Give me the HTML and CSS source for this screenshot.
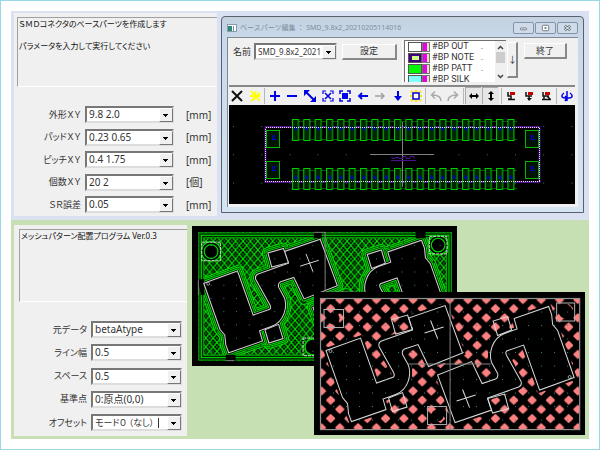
FILE: index.html
```html
<!DOCTYPE html>
<html lang="ja">
<head>
<meta charset="utf-8">
<title>SMDコネクタ / メッシュパターン</title>
<link rel="stylesheet" href="styles.css">
</head>
<body>
<main class="page">
  <section class="maker">
    <div class="panel">
      <div class="message">
        <p>ＳＭＤコネクタのベースパーツを作成します</p>
        <p>パラメータを入力して実行してください</p>
      </div>
      <form class="fields fields-units">
        <label for="outer">外形ＸＹ</label><span class="combo"><select id="outer"><option>9.8 2.0</option></select></span><span>[mm]</span>
        <label for="pad">パッドＸＹ</label><span class="combo"><select id="pad"><option>0.23 0.65</option></select></span><span>[mm]</span>
        <label for="pitch">ピッチＸＹ</label><span class="combo"><select id="pitch"><option>0.4 1.75</option></select></span><span>[mm]</span>
        <label for="count">個数ＸＹ</label><span class="combo"><select id="count"><option>20 2</option></select></span><span>[個]</span>
        <label for="sr">ＳＲ誤差</label><span class="combo"><select id="sr"><option>0.05</option></select></span><span>[mm]</span>
      </form>
    </div>

    <div class="window">
      <header class="titlebar">
        <svg class="app-icon" viewBox="0 0 10 8"><rect x=".5" y=".5" width="9" height="7" fill="#fff" stroke="#8a9aaa"/><rect x="1" y="2" width="4" height="5" fill="#2c8a78"/><rect x="6" y="2" width="1" height="5" fill="#6b8fb5"/></svg>
        <h1>ベースパーツ編集 ： SMD_9.8x2_20210205114016</h1>
        <div class="window-buttons">
          <button type="button" aria-label="最小化"><svg viewBox="0 0 20 11"><rect x="6.500" y="5.500" width="7" height="2" rx="1" fill="#fff" stroke="#66717e"/></svg></button>
          <button type="button" aria-label="最大化"><svg viewBox="0 0 20 11"><rect x="6.500" y="2.500" width="7" height="6" rx="1" fill="#fff" stroke="#66717e"/><rect x="9" y="4.500" width="2" height="2" fill="#66717e"/></svg></button>
          <button type="button" aria-label="閉じる"><svg viewBox="0 0 20 11"><path d="M7 3l6 5M13 3l-6 5" stroke="#66717e" stroke-width="3"/><path d="M7 3l6 5M13 3l-6 5" stroke="#fff" stroke-width="1"/></svg></button>
        </div>
      </header>
      <div class="client">
        <div class="controls">
          <div class="name-group">
            <label for="name">名前</label>
            <span class="combo"><select id="name"><option>SMD_9.8x2_20210205114016</option></select></span>
            <button type="button" class="push">設定</button>
          </div>
          <div class="layers">
            <ul>
              <li><svg viewBox="0 0 22 10"><use href="#chip"/><rect x="1" y="1" width="12" height="8" fill="#fff"/></svg>#BP OUT<i>.</i></li>
              <li><svg viewBox="0 0 22 10"><use href="#chip"/><rect x="1" y="1" width="12" height="8" fill="#400080"/><rect x="4" y="3" width="7" height="4" fill="#d0ff80"/></svg>#BP NOTE<i>.</i></li>
              <li><svg viewBox="0 0 22 10"><use href="#chip"/><rect x="1" y="1" width="12" height="8" fill="#00f800"/></svg>#BP PATT<i>.</i></li>
              <li><svg viewBox="0 0 22 10"><use href="#chip"/><rect x="1" y="1" width="12" height="8" fill="#80ffff"/></svg>#BP SILK</li>
            </ul>
            <svg class="scroll" viewBox="0 0 11 41"><rect width="11" height="41" fill="#f0f0f0"/><rect x="1" y="11" width="9" height="11" fill="#cdcdcd"/><path d="M3 8l2.500-2.500 2.500 2.500M3 34l2.500 2.500 2.500-2.500" fill="none" stroke="#444" stroke-width="1.500"/></svg>
          </div>
          <button type="button" class="push move">↓</button>
          <button type="button" class="push quit">終了</button>
        </div>
        <div class="toolbar">
          <button type="button" aria-label="取消"><svg viewBox="0 0 16 16"><path d="M3 3l10 10M13 3l-10 10" stroke="#111" stroke-width="2"/></svg></button>
          <button type="button" aria-label="再描画"><svg viewBox="0 0 16 16"><path d="M4 3l9 10M13 5l-9 8M9 3L7 12M3 8h10" stroke="#ff0" stroke-width="1.800"/></svg></button>
          <hr>
          <button type="button" aria-label="拡大"><svg viewBox="0 0 16 16"><path d="M3 8h10M8 3v10" stroke="#0000e8" stroke-width="2"/></svg></button>
          <button type="button" aria-label="縮小"><svg viewBox="0 0 16 16"><path d="M3 8h10" stroke="#0000e8" stroke-width="2"/></svg></button>
          <button type="button" aria-label="範囲"><svg viewBox="0 0 16 16"><path d="M4 4l8 8" stroke="#0000e8" stroke-width="2"/><path d="M2 8V2h6zM14 8v6H8z" fill="#0000e8"/></svg></button>
          <button type="button" aria-label="全体"><svg viewBox="0 0 16 16"><path d="M3 6V3h3M10 3h3v3M13 10v3h-3M6 13H3v-3" fill="none" stroke="#0000e8" stroke-width="1.200"/><path d="M5 5l6 6M11 5l-6 6" stroke="#0000e8" stroke-width="1.500"/></svg></button>
          <button type="button" aria-label="画面"><svg viewBox="0 0 16 16"><path d="M3 6V3h3M10 3h3v3M13 10v3h-3M6 13H3v-3" fill="none" stroke="#0000e8" stroke-width="1.500"/><rect x="5" y="5" width="6" height="6" fill="#0000e8"/></svg></button>
          <button type="button" aria-label="左"><svg viewBox="0 0 16 16"><path d="M13 8H4M7 5L4 8l3 3" fill="none" stroke="#0000e8" stroke-width="1.800"/></svg></button>
          <button type="button" aria-label="右"><svg viewBox="0 0 16 16"><path d="M3 8h9M9 5l3 3-3 3" fill="none" stroke="#a0a0a0" stroke-width="1.500"/></svg></button>
          <button type="button" aria-label="下"><svg viewBox="0 0 16 16"><path d="M8 3v7" stroke="#0000e8" stroke-width="2"/><path d="M4 8h8l-4 5z" fill="#0000e8"/></svg></button>
          <button type="button" aria-label="強調"><svg viewBox="0 0 16 16"><path d="M8 2v12M2 8h12M3 3l10 10M13 3L3 13" stroke="#ffe600" stroke-width="2"/><rect x="5" y="5" width="6" height="6" fill="#fff" stroke="#0000e8" stroke-width="1.500"/></svg></button>
          <hr>
          <button type="button" aria-label="元に戻す"><svg viewBox="0 0 16 16"><path d="M13 13C13 8 9 7 4 7M7 3.500L3.500 7 7 10.500" fill="none" stroke="#a8a8a8" stroke-width="1.500"/></svg></button>
          <button type="button" aria-label="やり直し"><svg viewBox="0 0 16 16"><path d="M3 13C3 8 7 7 12 7M9 3.500L12.500 7 9 10.500" fill="none" stroke="#a8a8a8" stroke-width="1.500"/></svg></button>
          <hr>
          <button type="button" class="pressed" aria-label="左右"><svg viewBox="0 0 16 16"><path d="M5 8h6" stroke="#000" stroke-width="2"/><path d="M3 8l3-3v6zM13 8l-3-3v6z"/></svg></button>
          <button type="button" class="pressed" aria-label="上下"><svg viewBox="0 0 16 16"><path d="M8 5v6" stroke="#000" stroke-width="2"/><path d="M8 3L5 6h6zM8 13l-3-3h6z"/></svg></button>
          <hr>
          <button type="button" aria-label="配置1"><svg viewBox="0 0 16 16"><path d="M5 4v4h3v3H5M5 11.500h7" fill="none" stroke="#111" stroke-width="1.500"/><rect x="7" y="4" width="5" height="3" fill="#c80000"/></svg></button>
          <button type="button" aria-label="配置2"><svg viewBox="0 0 16 16"><path d="M5 4v4h6M8 8v4" fill="none" stroke="#111" stroke-width="1.500"/><path d="M6 10h5l-3 3z" fill="#111"/><rect x="7" y="4" width="5" height="3" fill="#c80000"/></svg></button>
          <button type="button" aria-label="配置3"><svg viewBox="0 0 16 16"><path d="M5 4v4h6M6 8v4M4 11.500h9M9 8l3 3" fill="none" stroke="#111" stroke-width="1.500"/><rect x="7" y="4" width="5" height="3" fill="#c80000"/></svg></button>
          <hr>
          <button type="button" aria-label="回転"><svg viewBox="0 0 16 16"><path d="M8 3v10M5 5c-3 2-3 5 1 5h4c4 0 4-3 1-5M6 8l2 2-2 3" fill="none" stroke="#0000e8" stroke-width="1.500"/></svg></button>
        </div>
        <svg class="drawing" viewBox="229 105 346 99" role="img" aria-label="コネクタのパッド配置">
          <defs>
            <g id="chip"><rect width="14" height="10" fill="#555"/><rect x="14" width="8" height="10" fill="#777"/><rect x="15" y="1" width="4" height="8" fill="#e800e8"/><rect x="19" y="1" width="2" height="8" fill="#e8e8b0"/></g>
            <pattern id="pads" x="291" y="119" width="11.340" height="49" patternUnits="userSpaceOnUse">
              <path d="M0 2.500h12M0 20.500h12" stroke="#005a00"/>
              <rect x="1.500" y=".5" width="6" height="21" fill="#002400" stroke="#00d000"/>
              <path d="M3.500 7v4M5.500 8v4M3 9.500h3" stroke="#0000d8"/>
            </pattern>
            <g id="corner"><rect x=".5" y=".5" width="13" height="17" fill="#001400" stroke="#00b400"/><path d="M6.500 5v5M7 9.500h3M8.500 5v3" stroke="#0000f0"/></g>
            <pattern id="grid" x="233" y="126" width="28.200" height="28.300" patternUnits="userSpaceOnUse"><rect width="1" height="1" fill="#3a7468"/></pattern>
          </defs>
          <rect x="229" y="105" width="346" height="99"/>
          <rect x="229" y="105" width="346" height="99" fill="url(#grid)"/>
          <rect x="265.500" y="127" width="274" height="55" fill="none" stroke="#4a1488" stroke-width="2"/>
          <rect x="291" y="119" width="226" height="22" fill="url(#pads)"/>
          <rect x="291" y="168" width="226" height="22" fill="url(#pads)"/>
          <rect x="265.500" y="127.500" width="274" height="54" fill="none" stroke="#e8e0f0" stroke-dasharray="1 1" shape-rendering="crispEdges"/>
          <use href="#corner" x="266" y="130"/><use href="#corner" x="266" y="161"/>
          <use href="#corner" x="525" y="130"/><use href="#corner" x="525" y="161"/>
          <path d="M370 154.500h64M402.500 122v65" stroke="#808080"/>
          <path d="M391 160.500h25M392 156.500v2h3v-1h4v1h4v-2h3v2h4v-2h4v2" fill="none" stroke="#48108a"/>
        </svg>
      </div>
    </div>
  </section>

  <section class="mesh">
    <div class="panel">
      <div class="message"><p>メッシュパターン配置プログラム Ver.0.3</p></div>
      <form class="fields">
        <label for="source">元データ</label><span class="combo"><select id="source"><option>betaAtype</option></select></span>
        <label for="line">ライン幅</label><span class="combo"><select id="line"><option>0.5</option></select></span>
        <label for="space">スペース</label><span class="combo"><select id="space"><option>0.5</option></select></span>
        <label for="base">基準点</label><span class="combo"><select id="base"><option>0:原点(0,0)</option></select></span>
        <label for="offset">オフセット</label><span class="combo editing"><select id="offset"><option>モード０ （なし）</option></select></span>
      </form>
    </div>
    <div class="boards">
      <svg class="board-green" viewBox="-6.500 -6.500 271 143" role="img" aria-label="ライン塗りの基板">
        <defs>
          <path id="body" d="M5.500 52L40 39.500 56 84.500 73 78.500Q74.500 77 73 74L58.500 48Q57.500 44 61 42.500L92 31.500 88 19.500 124.500 7 142 54.500 108 68 97.500 46 84 50.500Q81 52 82 56L88 67C91 76 88 91 75 96L62.500 100.500 65.500 111 31 123 28 115 27 105 22 99Z"/>
          <path id="tab" d="M75 35.500L71 21 87 16.500 92 31Z"/>
          <path id="tab2" d="M68 99.500L82 94 86.500 108.500 72 113Z"/>
          <g id="half"><use href="#body"/><use href="#tab"/><use href="#tab2"/></g>
          <g id="both"><use href="#half"/><use href="#half" transform="rotate(180 129.500 65.500)"/></g>
          <g id="marks" fill="none" stroke="#d8d8d8">
            <path d="M104 34.500l19-6M110 22l7 18"/>
            <circle cx="10" cy="52.500" r="1.500" stroke-width=".7"/>
          </g>
          <pattern id="hatch" width="7.600" height="9" patternUnits="userSpaceOnUse"><path d="M0 0l7.600 9M7.600 0L0 9" stroke="#00e000" stroke-width="1.200"/><path d="M-1.900 2.250l3.800 4.500M5.700 2.250l3.800 4.500M1.900 2.250l-3.800 4.500M9.500 2.250l-3.800 4.500M1.900-2.250l3.800 4.500M5.700-2.250l-3.800 4.500M1.900 6.750l3.800 4.500M5.700 6.750l-3.800 4.500" stroke="#009000" stroke-width=".8"/></pattern>
          <pattern id="dots" x="25.500" y="13" width="13" height="13.500" patternUnits="userSpaceOnUse"><rect width="1" height="1" fill="#3a8488"/></pattern>
          <pattern id="diamonds" x="1" y="1" width="18.300" height="18.300" patternUnits="userSpaceOnUse">
            <g fill="#ff8080" stroke="#ff8080" stroke-width="2" stroke-linejoin="round"><path id="d" d="M9.150 5.650l3.500 3.500-3.500 3.500-3.500-3.500z"/><use href="#d" x="-9.150" y="-9.150"/><use href="#d" x="9.150" y="-9.150"/><use href="#d" x="-9.150" y="9.150"/><use href="#d" x="9.150" y="9.150"/></g>
          </pattern>
        </defs>
        <rect x="-6.500" y="-6.500" width="271" height="143"/>
        <rect width="259" height="131" fill="url(#hatch)"/>
        <g fill="none" stroke-linejoin="round">
          <use href="#both" stroke="#00e800" stroke-width="12"/>
          <use href="#both" stroke="#003800" stroke-width="10"/>
          <use href="#both" stroke="#00e800" stroke-width="8.500" stroke-dasharray="14 1"/>
          <use href="#both" stroke="#003800" stroke-width="6.500"/>
          <use href="#both" stroke="#00e800" stroke-width="5"/>
          <use href="#both" stroke="#000" stroke-width="3"/>
        </g>
        <g fill="none"><rect x="3" y="3" width="253" height="125" stroke="#002800" stroke-width="5"/><rect x=".5" y=".5" width="258" height="130" stroke="#00b000"/><rect x="3" y="3" width="253" height="125" stroke="#00e800"/><rect x="5.500" y="5.500" width="248" height="120" stroke="#00b000"/></g>
        <g stroke="#00dc00" stroke-width="1.200"><circle cx="13" cy="19.500" r="10"/><circle cx="13" cy="19.500" r="7"/><circle cx="245" cy="13" r="10"/><circle cx="245" cy="13" r="7"/><circle cx="117" cy="117" r="8"/></g>
        <path d="M-1 48h7v16h-3zM118 -1h8v7h-8zM28 125h10v7H28zM222 -1h10v7h-10z"/>
        <use href="#both" fill="#000" stroke="#d0d0d0" stroke-width="1.100"/>
        <g fill="none" stroke="#d8d8d8" stroke-dasharray="3 1"><rect x="3.500" y="10" width="19" height="19"/><rect x="236" y="4" width="18" height="18"/><rect x="107" y="108" width="19" height="18"/></g>
        <rect width="259" height="131" fill="url(#dots)"/>
        <path d="M129.500 0v60M126 61h36M0 48v16M118 0h12M28 131h9" stroke="#808080"/>
        <use href="#marks"/><use href="#marks" transform="rotate(180 129.500 65.500)"/>
      </svg>
      <svg class="board-pink" viewBox="-6.500 -6.500 271 143" role="img" aria-label="メッシュ塗りの基板">
        <rect x="-6.500" y="-6.500" width="271" height="143"/>
        <rect width="259" height="131" fill="url(#diamonds)"/>
        <use href="#body" stroke="#000" stroke-width="5"/>
        <use href="#body" transform="rotate(180 129.500 65.500)" stroke="#000" stroke-width="5"/>
        <g stroke="#d8d8d8" fill="none">
          <use href="#body" fill="#000"/>
          <use href="#body" fill="#000" transform="rotate(180 129.500 65.500)"/>
          <use href="#tab"/><use href="#tab2"/>
          <g transform="rotate(180 129.500 65.500)"><use href="#tab"/><use href="#tab2"/></g>
        </g>
        <circle cx="13" cy="20" r="6"/><circle cx="245" cy="13" r="7"/><circle cx="117" cy="117" r="6"/>
        <g fill="none" stroke="#b0b0b0"><rect x="3.500" y="11" width="19.500" height="18"/><rect x="236" y="4.500" width="18" height="18"/><rect x="107" y="108" width="19" height="18"/></g>
        <rect width="259" height="131" fill="url(#dots)"/>
        <rect width="259" height="131" fill="none" stroke="#909090" stroke-width="1.200"/>
        <path d="M129.500 0v131M87 65.500h83" stroke="#808080"/>
        <use href="#marks"/><use href="#marks" transform="rotate(180 129.500 65.500)"/>
      </svg>
    </div>
  </section>
</main>
</body>
</html>
```
FILE: styles.css
```css
* { box-sizing: border-box; }

body {
  margin: 0;
  font: 10px/14px "Noto Sans", "Noto Sans CJK JP", sans-serif;
  font-feature-settings: "palt";
  color: #333;
  background: #fff;
}

.page {
  display: flex;
  flex-direction: column;
  min-height: 100vh;
  padding: 10px;
  border: 1px solid #9ad7e6;
}

svg { display: block; }
p, h1, ul { margin: 0; padding: 0; font-weight: normal; }
button, select { font: inherit; color: inherit; margin: 0; }

.maker {
  display: grid;
  grid-template-columns: 203fr 363fr;
  gap: 4px;
  padding: 2px 5px 4px 3px;
  background: #d9e1f2;
}

.mesh {
  flex: 1;
  display: grid;
  grid-template-columns: 173fr 393fr;
  gap: 5px;
  padding: 5px 4px 3px 3px;
  background: #c6e0b4;
}

.panel {
  display: flex;
  flex-direction: column;
  background: #f0f0f0;
  padding: 4px 0 3px 3px;
}

.message {
  height: 70px;
  padding: 0 1px;
  border: solid #a0a0a0;
  border-width: 1px 0 0 1px;
  border-bottom: 1px solid #fff;
  font-size: 8px;
  line-height: 12px;
  white-space: nowrap;
  color: #111;
}
.message p + p { margin-top: 10px; }

.mesh .message { height: 73px; margin-left: 2px; }

.fields {
  flex: 1;
  display: grid;
  grid-template-columns: 70px 1fr;
  align-content: space-between;
  align-items: center;
  column-gap: 4px;
  padding: 19px 5px 0 0;
  line-height: 16px;
}
.mesh .fields { padding-bottom: 2px; }
.fields-units {
  grid-template-columns: 64px 1fr 39px;
  padding: 19px 0 0;
}
.fields-units > span:nth-child(3n) { padding-left: 8px; }
.fields label { text-align: right; white-space: nowrap; font-size: 9px; }

.combo { position: relative; display: block; min-width: 0; }
.combo select {
  display: block;
  width: 100%;
  height: 17px;
  padding: 0 14px 0 2px;
  appearance: none;
  border: 2px solid #777;
  border-color: #777 #ddd #ddd #777;
  border-radius: 0;
  background: #fff;
  line-height: 13px;
}
.combo::after {
  content: "";
  position: absolute;
  top: 2px;
  right: 1px;
  bottom: 1px;
  width: 12px;
  border: 1px solid #fff;
  border-right-color: #777;
  border-bottom-color: #777;
  background: linear-gradient(#000, #000) 3px 5px / 5px 1px no-repeat,
    linear-gradient(#000, #000) 4px 6px / 3px 1px no-repeat,
    linear-gradient(#000, #000) 5px 7px / 1px 1px no-repeat, #f0f0f0;
  pointer-events: none;
}
.editing select { font-size: 9px; }
.editing::before {
  content: "";
  position: absolute;
  top: 4px;
  bottom: 3px;
  left: 67px;
  width: 1px;
  background: #333;
}

.window {
  align-self: start;
  margin: 3px 0;
  padding: 0 5px 5px;
  border: 1px solid #59616b;
  border-radius: 4px 4px 0 0;
  background: linear-gradient(#c3d1e0, #c9d9e9 21px, #d5e4f2);
}
.titlebar { display: flex; align-items: center; gap: 3px; height: 20px; padding-top: 2px; }
.titlebar h1 {
  flex: 1;
  font: 7px/12px "Noto Sans", "Noto Sans CJK JP", sans-serif;
  color: #7f8e9f;
  white-space: nowrap;
}
.app-icon { width: 10px; height: 8px; }
.window-buttons { display: flex; gap: 1px; }
.window-buttons button {
  width: 21px;
  height: 12px;
  padding: 0;
  border: 1px solid #8494a7;
  border-radius: 2px;
  background: #cfdbe8;
}
.window-buttons svg { width: 100%; height: 100%; }

.client {
  padding: 0 3px 3px 1px;
  border: 1px solid #808890;
  border-width: 1px 0 0 1px;
  background: #f0f0f0;
}

.controls {
  display: grid;
  grid-template-columns: 172fr 103fr 11px 48px;
  column-gap: 1px;
  height: 47px;
  padding: 2px 8px 0 4px;
}
.name-group {
  display: grid;
  grid-template-columns: auto 84fr 58fr;
  align-items: center;
  align-content: start;
  column-gap: 3px;
  padding: 3px 5px 0 0;
  border-right: 1px solid #fff;
  font-size: 9px;
}
.name-group .combo select { font-size: 8px; }
.name-group .push { margin-left: 2px; }

.push {
  height: 16px;
  padding: 0;
  border: 1px solid #fff;
  border-right: 2px solid #888;
  border-bottom: 2px solid #888;
  background: #f0f0f0;
  font-size: 9px;
  line-height: 12px;
}
.move { height: 36px; margin-top: 2px; }
.quit { margin: 3px 0 0 5px; }

.layers {
  display: flex;
  height: 42px;
  overflow: hidden;
  border: solid #707070;
  border-width: 1px 0 0 1px;
  background: #fff;
}
.layers ul { flex: 1; list-style: none; }
.layers li {
  display: flex;
  align-items: center;
  gap: 2px;
  height: 11px;
  padding-left: 3px;
  font: 9px/11px Roboto, sans-serif;
  white-space: nowrap;
}
.layers li svg { width: 22px; height: 10px; }
.layers i { margin: 0 12px 0 auto; font-style: normal; }
.scroll { width: 11px; height: 41px; }

.toolbar {
  display: flex;
  justify-content: space-between;
  align-items: center;
  height: 20px;
  border-top: 2px solid #888;
}
.toolbar button {
  width: 16px;
  height: 17px;
  padding: 0;
  border: 0;
  background: none;
}
.toolbar .pressed { background: #e6e6e6; box-shadow: -1px -1px #aaa; }
.toolbar svg { width: 16px; height: 16px; }
.toolbar hr { width: 1px; height: 16px; margin: 0; border: 0; background: #b8b8b8; }

.drawing { width: 100%; height: auto; }

.boards { position: relative; margin-top: 1px; }
.board-green { width: 67.5%; }
.board-pink { position: absolute; right: 0; bottom: 1px; width: 69%; }
```
